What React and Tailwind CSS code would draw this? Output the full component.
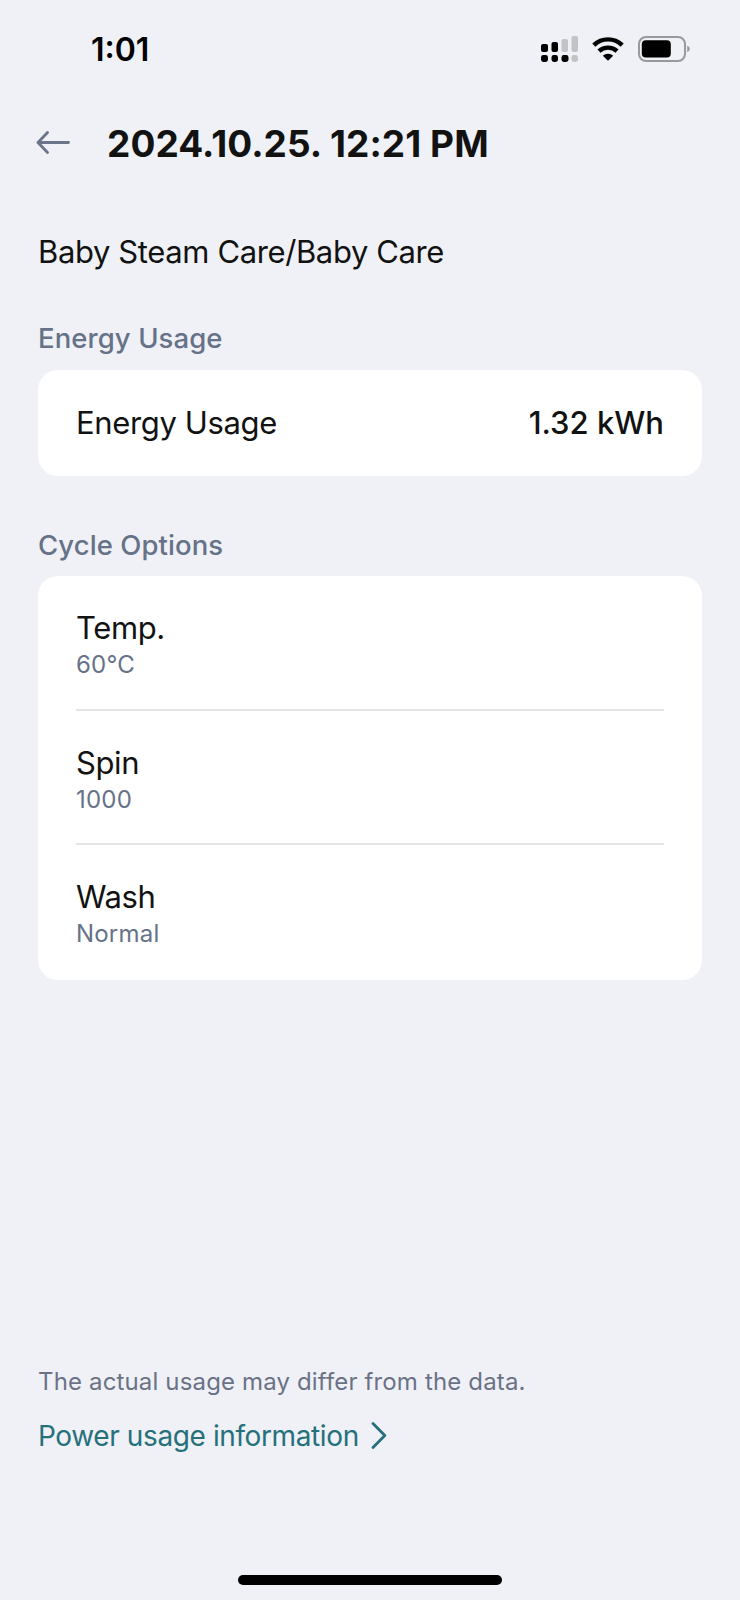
import React from 'react';

const cycleOptions = [
    { name: 'Temp.', value: '60°C' },
    { name: 'Spin', value: '1000' },
    { name: 'Wash', value: 'Normal' },
];

const SignalIcon = () => (
    <svg width="38" height="28" viewBox="0 0 38 28">
        <g fill="#000">
            <rect x="0" y="9" width="7" height="8" rx="2" />
            <rect x="10.5" y="7" width="6.5" height="10" rx="2" />
            <rect x="0" y="20" width="7" height="7" rx="2.4" />
            <rect x="10.5" y="20" width="6.5" height="7" rx="2.4" />
            <rect x="20.5" y="20" width="7" height="7" rx="2.4" />
        </g>
        <g fill="#c2c3c6">
            <rect x="20.5" y="4" width="6.5" height="13" rx="2" />
            <rect x="30.5" y="1" width="6.5" height="16" rx="2" />
            <rect x="30.5" y="20" width="6.5" height="7" rx="2.4" />
        </g>
    </svg>
);

const WifiIcon = () => (
    <svg width="32" height="24" viewBox="0 0 32 24" fill="none" stroke="#000" strokeWidth="4.4">
        <path d="M1.8 8.2C5.6 4.5 10.5 2.4 16 2.4s10.4 2.1 14.2 5.8" />
        <path d="M7 14.2c2.4-2.3 5.5-3.6 9-3.6s6.6 1.3 9 3.6" />
        <path d="M16 23.8l-5.2-5.1c1.4-1.3 3.2-2 5.2-2s3.8.7 5.2 2z" fill="#000" stroke="none" />
    </svg>
);

const BatteryIcon = () => (
    <svg width="52" height="26" viewBox="0 0 52 26">
        <rect x="1" y="1" width="46" height="24" rx="7" fill="none" stroke="#98999c" strokeWidth="2" />
        <rect x="3.8" y="4.3" width="29" height="17.2" rx="4" fill="#000" />
        <path d="M49.2 9.8c1.7.7 2.5 1.8 2.5 3.2s-.8 2.5-2.5 3.2z" fill="#98999c" />
    </svg>
);

const App = () => {
    return (
        <div className="flex h-[1600px] w-[740px] flex-col bg-[#eff1f6] font-['Inter',sans-serif] text-[#121212]">
            <div className="flex h-[98px] items-center justify-between pl-[91px] pr-[50px]">
                <span className="pt-0.5 text-[32px] font-semibold text-black">1:01</span>
                <div className="flex items-center">
                    <SignalIcon />
                    <div className="ml-[13px]">
                        <WifiIcon />
                    </div>
                    <div className="ml-3.5">
                        <BatteryIcon />
                    </div>
                </div>
            </div>

            <header className="flex h-[91px] items-center pl-[36px]">
                <svg width="36" height="26" viewBox="0 0 36 26" fill="none" stroke="#6b7488" strokeWidth="2.8" strokeLinecap="round" strokeLinejoin="round">
                    <path d="M11.5 1.5L2 11.5l9.5 10M2 11.5h30.5" />
                </svg>
                <h1 className="ml-[35px] text-[37px] font-bold tracking-[0.08px]">2024.10.25. 12:21 PM</h1>
            </header>

            <main className="flex flex-1 flex-col px-[38px] pt-[43px]">
                <p className="text-[31px] leading-[40px] tracking-[-0.38px]">Baby Steam Care/Baby Care</p>

                <h2 className="mt-[48px] text-[27.5px] font-medium leading-[36px] tracking-[0.08px] text-[#667287]">Energy Usage</h2>
                <div className="mt-[14px] flex h-[106px] items-center justify-between rounded-[20px] bg-white px-[38px] text-[31px]">
                    <span className="tracking-[-0.36px]">Energy Usage</span>
                    <span className="font-medium">1.32 kWh</span>
                </div>

                <h2 className="mt-[51px] text-[27.5px] font-medium leading-[36px] tracking-[0.08px] text-[#667287]">Cycle Options</h2>
                <ul className="mt-[13px] grid h-[404px] grid-rows-3 rounded-[20px] bg-white px-[38px]">
                    {cycleOptions.map((option) => (
                        <li key={option.name} className="border-b-2 border-[#e4e5e8] pt-[32px] last:border-b-0">
                            <p className="text-[31px] leading-[40px] tracking-[-0.38px]">{option.name}</p>
                            <p className="text-[24px] leading-[34px] tracking-[0.2px] text-[#667287]">{option.value}</p>
                        </li>
                    ))}
                </ul>

                <div className="mt-auto pb-[121px]">
                    <p className="text-[24px] leading-[32px] tracking-[0.15px] text-[#6b7286]">The actual usage may differ from the data.</p>
                    <a className="mt-[20px] flex items-center text-[28px] leading-[36px] tracking-[-0.39px] text-[#26707c]">
                        Power usage information
                        <svg className="ml-3" width="18" height="28" viewBox="0 0 18 28" fill="none" stroke="#26707c" strokeWidth="2.8" strokeLinecap="round" strokeLinejoin="round">
                            <path d="M2 1.5L13.8 13.5 2 25.5" />
                        </svg>
                    </a>
                </div>
            </main>

            <div className="flex h-[25px] justify-center">
                <div className="h-[10px] w-[264px] rounded-full bg-black" />
            </div>
        </div>
    );
};

export default App;
